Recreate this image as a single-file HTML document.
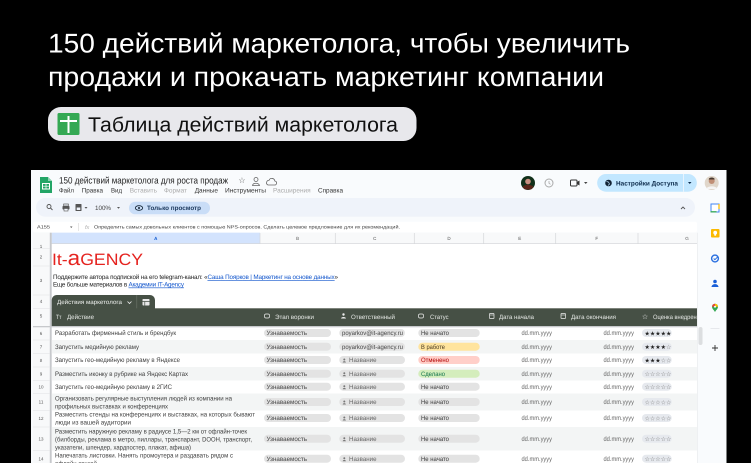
<!DOCTYPE html>
<html lang="ru"><head><meta charset="utf-8"><title>150 действий маркетолога</title>
<style>
html,body{margin:0;padding:0;background:#000;width:751px;height:463px;overflow:hidden}
svg{display:block;font-family:"Liberation Sans",sans-serif;filter:blur(.3px)}
.m{font-size:6.5px;fill:#333}.md{font-size:6.5px;fill:#aaa}
.n{font-size:4.5px;fill:#555;text-anchor:middle}
.h{font-size:6.2px;fill:#e6e9e6}
.t{font-size:6.5px;fill:#3c3c3c}
.p{font-size:6.3px;fill:#444}
.s{font-size:6.3px;fill:#3c3c3c}
.d{font-size:6.5px;fill:#666}
.star{font-size:6px;font-family:"DejaVu Sans",sans-serif;fill:#777}
.on{fill:#222}
.c{font-size:4.5px;fill:#555;text-anchor:middle}
</style></head><body>
<svg width="751" height="463" viewBox="0 0 751 463" xmlns="http://www.w3.org/2000/svg" text-rendering="geometricPrecision">
<rect width="751" height="463" fill="#000"/>
<text x="48" y="52.3" font-size="27" fill="#fff" textLength="582" lengthAdjust="spacingAndGlyphs">150 действий маркетолога, чтобы увеличить</text>
<text x="48" y="86" font-size="27" fill="#fff" textLength="556" lengthAdjust="spacingAndGlyphs">продажи и прокачать маркетинг компании</text>
<rect x="48" y="107" width="368.500" height="34" rx="13" fill="#e8e8ec"/>
<rect x="57.500" y="113" width="22" height="22" rx="1.500" fill="#34a853"/>
<rect x="67.500" y="116" width="2" height="17" fill="#fff"/><rect x="60" y="120" width="17" height="2" fill="#fff"/>
<text x="88" y="131.500" font-size="20.500" fill="#111" textLength="310" lengthAdjust="spacingAndGlyphs">Таблица действий маркетолога</text>

<rect x="31" y="170" width="695.500" height="293" fill="#f9fbfd"/>
<path d="M40 177h8l4 4v12H40z" fill="#23a566"/><path d="M48 177l4 4h-4z" fill="#8ed1b1"/>
<rect x="42.500" y="183.500" width="7" height="5.500" fill="none" stroke="#fff" stroke-width="1"/><path d="M42.500 186.200h7M46 183.500v5.500" stroke="#fff" stroke-width=".7"/>
<text x="59" y="183.300" font-size="9.300" fill="#222" textLength="169" lengthAdjust="spacingAndGlyphs">150 действий маркетолога для роста продаж</text>
<text x="242" y="183" font-size="8" fill="#555" font-family="DejaVu Sans" text-anchor="middle">☆</text>
<circle cx="256" cy="179.500" r="2" fill="none" stroke="#666" stroke-width=".8"/><path d="M252.500 185.500c.5-3 6-3 7 0z" fill="none" stroke="#666" stroke-width=".8"/>
<path d="M268 185h6.500a2 2 0 0 0 .3-4 3 3 0 0 0-5.800-.6 2.400 2.400 0 0 0-1 4.600z" fill="none" stroke="#666" stroke-width=".8"/>
<text x="59" y="192.300" class="m" textLength="15" lengthAdjust="spacingAndGlyphs">Файл</text>
<text x="81.700" y="192.300" class="m" textLength="21.300" lengthAdjust="spacingAndGlyphs">Правка</text>
<text x="111" y="192.300" class="m" textLength="11" lengthAdjust="spacingAndGlyphs">Вид</text>
<text x="129.700" y="192.300" class="md" textLength="27.300" lengthAdjust="spacingAndGlyphs">Вставить</text>
<text x="164" y="192.300" class="md" textLength="23" lengthAdjust="spacingAndGlyphs">Формат</text>
<text x="194.700" y="192.300" class="m" textLength="23.300" lengthAdjust="spacingAndGlyphs">Данные</text>
<text x="225" y="192.300" class="m" textLength="41" lengthAdjust="spacingAndGlyphs">Инструменты</text>
<text x="273" y="192.300" class="md" textLength="37.700" lengthAdjust="spacingAndGlyphs">Расширения</text>
<text x="318" y="192.300" class="m" textLength="25" lengthAdjust="spacingAndGlyphs">Справка</text>

<circle cx="528" cy="183" r="7" fill="#12301a"/><circle cx="528" cy="181.500" r="2.800" fill="#c98f80"/><path d="M522.500 187c2-3 9-3 11 0l-2.500 2.500h-6z" fill="#5a2518"/>
<circle cx="549" cy="183" r="4" fill="none" stroke="#aaa" stroke-width="1"/><path d="M549 181v2.300l1.500 1" fill="none" stroke="#aaa" stroke-width=".8"/>
<rect x="570.500" y="180" width="6.500" height="6" rx="1" fill="none" stroke="#333" stroke-width="1"/><path d="M577 182l2.500-1.500v5L577 184z" fill="#333"/>
<path d="M584 182h3.500l-1.750 2z" fill="#444"/>
<path d="M606 174h82a8.800 8.800 0 0 1 0 17.700H606a8.800 8.800 0 0 1 0-17.700z" fill="#c2e7ff"/><rect x="683" y="174" width=".7" height="17.700" fill="#f9fbfd"/>
<circle cx="608.500" cy="183" r="3.300" fill="#123"/><path d="M606.500 181.500l2 .5 1 2-1.500 1.500" fill="none" stroke="#c2e7ff" stroke-width=".7"/>
<text x="616" y="185.300" font-size="6.500" font-weight="bold" fill="#0b2a4a" textLength="62" lengthAdjust="spacingAndGlyphs">Настройки Доступа</text>
<path d="M688 182h3.500l-1.750 2z" fill="#0b2a4a"/>
<circle cx="711.700" cy="183" r="7" fill="#e0d6ca"/><circle cx="711.700" cy="181" r="3" fill="#c08f76"/><path d="M711.700 177.500a3 2 0 0 1 3 2h-6a3 2 0 0 1 3-2z" fill="#4a3a30"/><path d="M706 189c1.500-3.500 10-3.500 11.500 0z" fill="#f5f5f5"/>

<rect x="36" y="198" width="659" height="18.700" rx="9.300" fill="#eff3fa"/>
<circle cx="49" cy="206.500" r="2" fill="none" stroke="#555" stroke-width=".9"/><path d="M50.500 208l2 2" stroke="#555" stroke-width=".9"/>
<rect x="62.500" y="206" width="7" height="3.500" rx=".7" fill="#555"/><rect x="63.700" y="204" width="4.600" height="2" fill="none" stroke="#555" stroke-width=".7"/><rect x="64" y="208.500" width="4" height="2.500" fill="#eff3fa" stroke="#555" stroke-width=".6"/>
<rect x="75.500" y="204" width="6" height="7" rx=".5" fill="#555"/><rect x="76.700" y="207.500" width="3.600" height="2.500" fill="#eff3fa"/>
<path d="M84.500 207h3l-1.500 1.700z" fill="#555"/>
<text x="95" y="210" font-size="6.300" fill="#444" textLength="16" lengthAdjust="spacingAndGlyphs">100%</text>
<path d="M117 207h3l-1.500 1.700z" fill="#555"/>
<rect x="129" y="201.700" width="81" height="12.600" rx="6.300" fill="#c9ddf7"/>
<ellipse cx="139" cy="208" rx="3.700" ry="2.300" fill="none" stroke="#123" stroke-width=".8"/><circle cx="139" cy="208" r="1" fill="#123"/>
<text x="147" y="210" font-size="6.300" font-weight="bold" fill="#1d3a5f" textLength="54" lengthAdjust="spacingAndGlyphs">Только просмотр</text>
<path d="M681 209l2-2 2 2" fill="none" stroke="#555" stroke-width=".9"/>

<rect x="33" y="221.700" width="664" height="10.500" rx="2" fill="#fff"/>
<text x="37" y="228.700" font-size="4.800" fill="#444" textLength="13" lengthAdjust="spacingAndGlyphs">A155</text>
<path d="M70 226.500h2.500l-1.250 1.500z" fill="#555"/>
<rect x="78.500" y="223" width=".5" height="8" fill="#ccc"/>
<text x="85" y="229" font-size="5.500" font-style="italic" fill="#aaa">fx</text>
<text x="94" y="228.700" font-size="4.800" fill="#444" textLength="306" lengthAdjust="spacingAndGlyphs">Определить самых довольных клиентов с помощью NPS-опросов. Сделать целевое предложение для их рекомендаций.</text>

<rect x="33" y="232.700" width="664" height="230.300" fill="#fff"/>
<rect x="33" y="232.700" width="664" height="11" fill="#f8f9fa"/>
<rect x="51.700" y="232.700" width="208.300" height="11" fill="#d3e3fd"/>
<path d="M260 233v11M335.300 233v11M414.300 233v11M483.700 233v11M555.700 233v11M638 233v11" stroke="#d5d7da" stroke-width=".7"/>
<rect x="33" y="243.300" width="664" height=".7" fill="#d5d7da"/>
<rect x="33" y="232.700" width="18" height="230.300" fill="#f8f9fa"/>
<rect x="49.800" y="232.700" width="1.900" height="230.300" fill="#c7c9cc"/>
<text x="155.800" y="239.800" class="c" font-weight="bold" style="fill:#0b57d0">A</text>
<text x="297.600" y="239.800" class="c">B</text><text x="374.800" y="239.800" class="c">C</text><text x="449" y="239.800" class="c">D</text><text x="519.700" y="239.800" class="c">E</text><text x="596.800" y="239.800" class="c">F</text><text x="687" y="239.800" class="c">G</text>
<path d="M33 248.500h17M33 266h17M33 295h17M33 308.300h17M33 340h17M33 353.500h17M33 367h17M33 380.500h17M33 393.500h17M33 410.500h17M33 427h17M33 450.500h17" stroke="#dfe1e4" stroke-width=".5"/>
<text x="41" y="248" class="n">1</text><text x="41" y="258.500" class="n">2</text><text x="41" y="282" class="n">3</text><text x="41" y="303" class="n">4</text><text x="41" y="317.500" class="n">5</text><text x="41" y="335" class="n">6</text><text x="41" y="348.500" class="n">7</text><text x="41" y="361.800" class="n">8</text><text x="41" y="375.500" class="n">9</text><text x="41" y="388.500" class="n">10</text><text x="41" y="403.500" class="n">11</text><text x="41" y="420" class="n">12</text><text x="41" y="440.500" class="n">13</text><text x="41" y="460.500" class="n">14</text>

<text x="52" y="265" font-size="16.500" fill="#e5231f" textLength="91" lengthAdjust="spacingAndGlyphs">It-<tspan font-size="21">a</tspan>GENCY</text>
<text x="53" y="279" font-size="6.300" fill="#222" textLength="285" lengthAdjust="spacing">Поддержите автора подпиской на его telegram-канал: «<tspan fill="#1155cc" text-decoration="underline">Саша Поярков | Маркетинг на основе данных</tspan>»</text>
<text x="53" y="286.500" font-size="6.300" fill="#222" textLength="131" lengthAdjust="spacing">Еще больше материалов в <tspan fill="#1155cc" text-decoration="underline">Академии IT-Agency</tspan></text>

<path d="M51.700 308.500V300a5 5 0 0 1 5-5H150a5 5 0 0 1 5 5v8.500z" fill="#465045"/>
<rect x="136.500" y="295" width=".6" height="13.500" fill="#6d766c"/>
<text x="57" y="304" font-size="6" fill="#eef0ee" textLength="65" lengthAdjust="spacingAndGlyphs">Действия маркетолога</text>
<path d="M127.500 301.500l2 2 2-2" fill="none" stroke="#eee" stroke-width=".8"/>
<rect x="142.500" y="299" width="7" height="6.500" rx=".7" fill="#e8e8e8"/><path d="M142.500 301.500h7M144.800 301.500v4" stroke="#465045" stroke-width=".7"/>
<rect x="51.700" y="308.300" width="645.300" height="17.700" fill="#465045"/>
<rect x="33" y="326" width="664" height="1.300" fill="#c7c9cc"/>

<rect x="51.700" y="340" width="645.300" height="13.500" fill="#f3f5f5"/>
<rect x="51.700" y="367" width="645.300" height="13.500" fill="#f3f5f5"/>
<rect x="51.700" y="393.500" width="645.300" height="17" fill="#f3f5f5"/>
<rect x="51.700" y="427" width="645.300" height="23.500" fill="#f3f5f5"/>

<text x="56" y="319" class="h" textLength="5.500" lengthAdjust="spacingAndGlyphs">Тт</text>
<text x="67" y="319" class="h" textLength="27" lengthAdjust="spacingAndGlyphs">Действие</text>
<rect x="264.500" y="314" width="5" height="4" rx="1.500" fill="none" stroke="#eee" stroke-width=".7"/>
<text x="275" y="319" class="h" textLength="39" lengthAdjust="spacingAndGlyphs">Этап воронки</text>
<circle cx="343.500" cy="314.500" r="1.200" fill="#eee"/><path d="M341 318.500c.3-2 4.700-2 5 0z" fill="#eee"/>
<text x="351" y="319" class="h" textLength="44" lengthAdjust="spacingAndGlyphs">Ответственный</text>
<rect x="418.500" y="314" width="5" height="4" rx="1.500" fill="none" stroke="#eee" stroke-width=".7"/>
<text x="430" y="319" class="h" textLength="18.500" lengthAdjust="spacingAndGlyphs">Статус</text>
<rect x="489.500" y="313.500" width="4.500" height="5" rx=".5" fill="none" stroke="#eee" stroke-width=".7"/><path d="M489.500 315h4.500" stroke="#eee" stroke-width=".6"/>
<text x="499" y="319" class="h" textLength="35" lengthAdjust="spacingAndGlyphs">Дата начала</text>
<rect x="561" y="313.500" width="4.500" height="5" rx=".5" fill="none" stroke="#eee" stroke-width=".7"/><path d="M561 315h4.500" stroke="#eee" stroke-width=".6"/>
<text x="571" y="319" class="h" textLength="45" lengthAdjust="spacingAndGlyphs">Дата окончания</text>
<text x="645" y="319.200" font-size="7" fill="#eee" font-family="DejaVu Sans" text-anchor="middle">☆</text>
<text x="653" y="319" class="h" textLength="50" lengthAdjust="spacingAndGlyphs">Оценка внедрения</text>

<text x="55" y="335.200" class="t" textLength="121" lengthAdjust="spacingAndGlyphs">Разработать фирменный стиль и брендбук</text>
<text x="55" y="348.800" class="t" textLength="84" lengthAdjust="spacingAndGlyphs">Запустить медийную рекламу</text>
<text x="55" y="362.200" class="t" textLength="125" lengthAdjust="spacingAndGlyphs">Запустить гео-медийную рекламу в Яндексе</text>
<text x="55" y="375.900" class="t" textLength="133" lengthAdjust="spacingAndGlyphs">Разместить иконку в рубрике на Яндекс Картах</text>
<text x="55" y="388.900" class="t" textLength="117" lengthAdjust="spacingAndGlyphs">Запустить гео-медийную рекламу в 2ГИС</text>
<text x="55" y="400.600" class="t" textLength="177" lengthAdjust="spacingAndGlyphs">Организовать регулярные выступления людей из компании на</text>
<text x="55" y="408.500" class="t" textLength="113" lengthAdjust="spacingAndGlyphs">профильных выставках и конференциях</text>
<text x="55" y="416.500" class="t" textLength="200" lengthAdjust="spacingAndGlyphs">Разместить стенды на конференциях и выставках, на которых бывают</text>
<text x="55" y="424.500" class="t" textLength="76" lengthAdjust="spacingAndGlyphs">люди из вашей аудитории</text>
<text x="55" y="433.500" class="t" textLength="192" lengthAdjust="spacingAndGlyphs">Разместить наружную рекламу в радиусе 1,5—2 км от офлайн-точек</text>
<text x="55" y="441.500" class="t" textLength="197" lengthAdjust="spacingAndGlyphs">(билборды, реклама в метро, пиллары, транспарант, DOOH, транспорт,</text>
<text x="55" y="449.500" class="t" textLength="136" lengthAdjust="spacingAndGlyphs">указатели, шпендер, хардпостер, плакат, афиша)</text>
<text x="55" y="457.500" class="t" textLength="178" lengthAdjust="spacingAndGlyphs">Напечатать листовки. Нанять промоутера и раздавать рядом с</text>
<text x="55" y="465.500" class="t" textLength="42" lengthAdjust="spacingAndGlyphs">офлайн-точкой</text>

<g fill="#e3e3e3">
<rect x="264" y="329" width="67" height="8" rx="4"/><rect x="264" y="342.700" width="67" height="8" rx="4"/><rect x="264" y="356" width="67" height="8" rx="4"/><rect x="264" y="369.700" width="67" height="8" rx="4"/><rect x="264" y="382.700" width="67" height="8" rx="4"/><rect x="264" y="398" width="67" height="8" rx="4"/><rect x="264" y="414" width="67" height="8" rx="4"/><rect x="264" y="434.700" width="67" height="8" rx="4"/><rect x="264" y="454.700" width="67" height="8" rx="4"/>
<rect x="339.300" y="329" width="65.700" height="8" rx="4"/><rect x="339.300" y="342.700" width="65.700" height="8" rx="4"/><rect x="339.300" y="356" width="65.700" height="8" rx="4"/><rect x="339.300" y="369.700" width="65.700" height="8" rx="4"/><rect x="339.300" y="382.700" width="65.700" height="8" rx="4"/><rect x="339.300" y="398" width="65.700" height="8" rx="4"/><rect x="339.300" y="414" width="65.700" height="8" rx="4"/><rect x="339.300" y="434.700" width="65.700" height="8" rx="4"/><rect x="339.300" y="454.700" width="65.700" height="8" rx="4"/>
<rect x="418.300" y="329" width="61.400" height="8" rx="4"/>
<rect x="418.300" y="382.700" width="61.400" height="8" rx="4"/><rect x="418.300" y="398" width="61.400" height="8" rx="4"/><rect x="418.300" y="414" width="61.400" height="8" rx="4"/><rect x="418.300" y="434.700" width="61.400" height="8" rx="4"/><rect x="418.300" y="454.700" width="61.400" height="8" rx="4"/>
</g>
<rect x="418.300" y="342.700" width="61.400" height="8" rx="4" fill="#ffe49e"/>
<rect x="418.300" y="356" width="61.400" height="8" rx="4" fill="#ffcfc9"/>
<rect x="418.300" y="369.700" width="61.400" height="8" rx="4" fill="#d4edbc"/>
<g fill="#e6e9ee">
<rect x="642" y="329" width="29.700" height="8" rx="4"/><rect x="642" y="342.700" width="29.700" height="8" rx="4"/><rect x="642" y="356" width="29.700" height="8" rx="4"/><rect x="642" y="369.700" width="29.700" height="8" rx="4"/><rect x="642" y="382.700" width="29.700" height="8" rx="4"/><rect x="642" y="398" width="29.700" height="8" rx="4"/><rect x="642" y="414" width="29.700" height="8" rx="4"/><rect x="642" y="434.700" width="29.700" height="8" rx="4"/><rect x="642" y="454.700" width="29.700" height="8" rx="4"/>
</g>

<text x="266.500" y="335.200" class="p" textLength="40.500" lengthAdjust="spacingAndGlyphs">Узнаваемость</text>
<text x="266.500" y="348.900" class="p" textLength="40.500" lengthAdjust="spacingAndGlyphs">Узнаваемость</text>
<text x="266.500" y="362.200" class="p" textLength="40.500" lengthAdjust="spacingAndGlyphs">Узнаваемость</text>
<text x="266.500" y="375.900" class="p" textLength="40.500" lengthAdjust="spacingAndGlyphs">Узнаваемость</text>
<text x="266.500" y="388.900" class="p" textLength="40.500" lengthAdjust="spacingAndGlyphs">Узнаваемость</text>
<text x="266.500" y="404.200" class="p" textLength="40.500" lengthAdjust="spacingAndGlyphs">Узнаваемость</text>
<text x="266.500" y="420.200" class="p" textLength="40.500" lengthAdjust="spacingAndGlyphs">Узнаваемость</text>
<text x="266.500" y="440.900" class="p" textLength="40.500" lengthAdjust="spacingAndGlyphs">Узнаваемость</text>
<text x="266.500" y="460.900" class="p" textLength="40.500" lengthAdjust="spacingAndGlyphs">Узнаваемость</text>

<text x="342" y="335.200" class="p" textLength="61" lengthAdjust="spacingAndGlyphs">poyarkov@it-agency.ru</text>
<text x="342" y="348.900" class="p" textLength="61" lengthAdjust="spacingAndGlyphs">poyarkov@it-agency.ru</text>
<g fill="#777">
<path d="M342.700 362.500c.2-1.800 3-1.800 3.200 0zM344.300 358.500a1 1 0 1 0 .01 0z"/>
<path d="M342.700 376.200c.2-1.800 3-1.800 3.200 0zM344.300 372.200a1 1 0 1 0 .01 0z"/>
<path d="M342.700 389.200c.2-1.800 3-1.800 3.200 0zM344.300 385.200a1 1 0 1 0 .01 0z"/>
<path d="M342.700 404.500c.2-1.800 3-1.800 3.200 0zM344.300 400.500a1 1 0 1 0 .01 0z"/>
<path d="M342.700 420.500c.2-1.800 3-1.800 3.200 0zM344.300 416.500a1 1 0 1 0 .01 0z"/>
<path d="M342.700 441.200c.2-1.800 3-1.800 3.200 0zM344.300 437.200a1 1 0 1 0 .01 0z"/>
<path d="M342.700 461.200c.2-1.800 3-1.800 3.200 0zM344.300 457.200a1 1 0 1 0 .01 0z"/>
</g>
<text x="349" y="362.200" class="p" textLength="27.500" lengthAdjust="spacingAndGlyphs" style="fill:#666">Название</text>
<text x="349" y="375.900" class="p" textLength="27.500" lengthAdjust="spacingAndGlyphs" style="fill:#666">Название</text>
<text x="349" y="388.900" class="p" textLength="27.500" lengthAdjust="spacingAndGlyphs" style="fill:#666">Название</text>
<text x="349" y="404.200" class="p" textLength="27.500" lengthAdjust="spacingAndGlyphs" style="fill:#666">Название</text>
<text x="349" y="420.200" class="p" textLength="27.500" lengthAdjust="spacingAndGlyphs" style="fill:#666">Название</text>
<text x="349" y="440.900" class="p" textLength="27.500" lengthAdjust="spacingAndGlyphs" style="fill:#666">Название</text>
<text x="349" y="460.900" class="p" textLength="27.500" lengthAdjust="spacingAndGlyphs" style="fill:#666">Название</text>

<text x="421" y="335.200" class="s" textLength="28" lengthAdjust="spacingAndGlyphs">Не начато</text>
<text x="421" y="348.900" class="s" textLength="24" lengthAdjust="spacingAndGlyphs" style="fill:#473821">В работе</text>
<text x="421" y="362.200" class="s" textLength="28" lengthAdjust="spacingAndGlyphs" style="fill:#b10202">Отменено</text>
<text x="421" y="375.900" class="s" textLength="24" lengthAdjust="spacingAndGlyphs" style="fill:#11734b">Сделано</text>
<text x="421" y="388.900" class="s" textLength="28" lengthAdjust="spacingAndGlyphs">Не начато</text>
<text x="421" y="404.200" class="s" textLength="28" lengthAdjust="spacingAndGlyphs">Не начато</text>
<text x="421" y="420.200" class="s" textLength="28" lengthAdjust="spacingAndGlyphs">Не начато</text>
<text x="421" y="440.900" class="s" textLength="28" lengthAdjust="spacingAndGlyphs">Не начато</text>
<text x="421" y="460.900" class="s" textLength="28" lengthAdjust="spacingAndGlyphs">Не начато</text>

<text x="521.500" y="335.200" class="d" textLength="30.500" lengthAdjust="spacingAndGlyphs">dd.mm.yyyy</text><text x="603.500" y="335.200" class="d" textLength="30.500" lengthAdjust="spacingAndGlyphs">dd.mm.yyyy</text>
<text x="521.500" y="348.900" class="d" textLength="30.500" lengthAdjust="spacingAndGlyphs">dd.mm.yyyy</text><text x="603.500" y="348.900" class="d" textLength="30.500" lengthAdjust="spacingAndGlyphs">dd.mm.yyyy</text>
<text x="521.500" y="362.200" class="d" textLength="30.500" lengthAdjust="spacingAndGlyphs">dd.mm.yyyy</text><text x="603.500" y="362.200" class="d" textLength="30.500" lengthAdjust="spacingAndGlyphs">dd.mm.yyyy</text>
<text x="521.500" y="375.900" class="d" textLength="30.500" lengthAdjust="spacingAndGlyphs">dd.mm.yyyy</text><text x="603.500" y="375.900" class="d" textLength="30.500" lengthAdjust="spacingAndGlyphs">dd.mm.yyyy</text>
<text x="521.500" y="388.900" class="d" textLength="30.500" lengthAdjust="spacingAndGlyphs">dd.mm.yyyy</text><text x="603.500" y="388.900" class="d" textLength="30.500" lengthAdjust="spacingAndGlyphs">dd.mm.yyyy</text>
<text x="521.500" y="404.200" class="d" textLength="30.500" lengthAdjust="spacingAndGlyphs">dd.mm.yyyy</text><text x="603.500" y="404.200" class="d" textLength="30.500" lengthAdjust="spacingAndGlyphs">dd.mm.yyyy</text>
<text x="521.500" y="420.200" class="d" textLength="30.500" lengthAdjust="spacingAndGlyphs">dd.mm.yyyy</text><text x="603.500" y="420.200" class="d" textLength="30.500" lengthAdjust="spacingAndGlyphs">dd.mm.yyyy</text>
<text x="521.500" y="440.900" class="d" textLength="30.500" lengthAdjust="spacingAndGlyphs">dd.mm.yyyy</text><text x="603.500" y="440.900" class="d" textLength="30.500" lengthAdjust="spacingAndGlyphs">dd.mm.yyyy</text>
<text x="521.500" y="460.900" class="d" textLength="30.500" lengthAdjust="spacingAndGlyphs">dd.mm.yyyy</text><text x="603.500" y="460.900" class="d" textLength="30.500" lengthAdjust="spacingAndGlyphs">dd.mm.yyyy</text>

<text x="644.500" y="335.300" class="star"><tspan class="on">★★★★★</tspan></text>
<text x="644.500" y="349" class="star"><tspan class="on">★★★★</tspan>☆</text>
<text x="644.500" y="362.300" class="star"><tspan class="on">★★★</tspan>☆☆</text>
<text x="644.500" y="376" class="star">☆☆☆☆☆</text>
<text x="644.500" y="389" class="star">☆☆☆☆☆</text>
<text x="644.500" y="404.300" class="star">☆☆☆☆☆</text>
<text x="644.500" y="420.300" class="star">☆☆☆☆☆</text>
<text x="644.500" y="441" class="star">☆☆☆☆☆</text>
<text x="644.500" y="461" class="star">☆☆☆☆☆</text>

<rect x="697" y="232" width="29.500" height="231" fill="#f9fbfd"/>
<rect x="697" y="232.700" width=".5" height="230.300" fill="#e3e5e8"/>
<rect x="698.500" y="327" width="4" height="18" rx="2" fill="#dcdee0"/>

<rect x="711" y="204" width="8" height="8" fill="#fff" stroke="#4285f4" stroke-width="1"/><path d="M710.500 211.800h6" stroke="#34a853" stroke-width="1.300"/><path d="M719 204v5" stroke="#fbbc04" stroke-width="1.300"/>
<rect x="711" y="229" width="8.500" height="8.500" rx="1" fill="#fbb900"/><circle cx="715.200" cy="232.700" r="1.900" fill="#fff"/><rect x="714.300" y="234.500" width="1.800" height="1.200" fill="#fff"/>
<circle cx="715" cy="258.500" r="3.400" fill="none" stroke="#2a6fe0" stroke-width="1.400"/><path d="M713.700 258.500l1.200 1.200 3-3" fill="none" stroke="#2a6fe0" stroke-width="1"/>
<circle cx="715" cy="281.500" r="1.800" fill="#1a5fd8"/><path d="M711.500 287c.3-3.800 6.700-3.800 7 0z" fill="#1a5fd8"/>
<path d="M715 312c-1-2-3-3.200-3-5.300a3 3 0 0 1 6 0c0 2.100-2 3.300-3 5.300z" fill="#34a853"/><path d="M712 306.700a3 3 0 0 1 3-3v3z" fill="#ea4335"/><path d="M715 303.700a3 3 0 0 1 3 3h-3z" fill="#fbbc04"/><circle cx="715" cy="306.700" r="1" fill="#fff"/>
<rect x="710.500" y="328" width="9" height=".6" fill="#dadce0"/>
<path d="M712 348h6M715 345v6" stroke="#333" stroke-width=".9"/>
</svg>
</body></html>
